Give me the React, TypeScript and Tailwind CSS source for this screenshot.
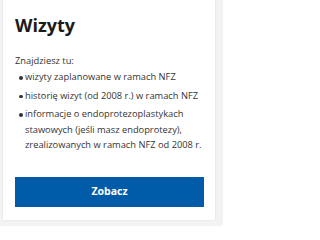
export default function App() {
  return (
    <div className="w-[223px] h-[226px] bg-[#f3f3f3] pl-[3px] pr-[8px] pb-[6px]" style={{ fontFamily: '"Open Sans", sans-serif' }}>
      <div className="bg-white h-full flex flex-col pl-[12px] pr-[11px] pt-[12.5px] pb-[13px] shadow-[0_0_2px_rgba(0,0,0,0.1)]">
        <h2 className="text-[18px] leading-[24px] font-bold text-[#1b1b1b]">Wizyty</h2>
        <p className="mt-[16px] text-[9.3px] leading-[15.5px] text-[#333]">Znajdziesz tu:</p>
        <ul className="mt-[1px] mr-[-3px] flex flex-col gap-[3px] text-[9.3px] leading-[15.5px] text-[#333]">
          <li className="flex gap-[2.5px] pl-[4px]"><span className="mt-[7px] w-[3.5px] h-[3.5px] rounded-full bg-[#333] shrink-0" /><span>wizyty zaplanowane w ramach NFZ</span></li>
          <li className="flex gap-[2.5px] pl-[4px]"><span className="mt-[7px] w-[3.5px] h-[3.5px] rounded-full bg-[#333] shrink-0" /><span>historię wizyt (od 2008 r.) w ramach NFZ</span></li>
          <li className="flex gap-[2.5px] pl-[4px]"><span className="mt-[7px] w-[3.5px] h-[3.5px] rounded-full bg-[#333] shrink-0" /><span>informacje o endoprotezoplastykach stawowych (jeśli masz endoprotezy), zrealizowanych w ramach NFZ od 2008 r.</span></li>
        </ul>
        <button className="mt-auto h-[30px] w-full bg-[#005ca9] text-white text-[10.5px] font-bold">Zobacz</button>
      </div>
    </div>
  );
}
